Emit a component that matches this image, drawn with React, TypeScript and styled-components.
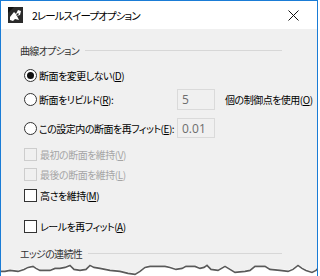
import React from "react";
import styled, { createGlobalStyle } from "styled-components";

const Global = createGlobalStyle`
  html, body { margin: 0; padding: 0; background: #ffffff; }
  body { font-family: "Noto Sans CJK JP", "Noto Sans", sans-serif; }
  u { text-decoration-thickness: 1px; text-underline-offset: 1px; }
`;

const BLUE = "#1a7cd6";

const Window = styled.div`
  position: relative;
  width: 316px;
  height: 276px;
  border: 1px solid ${BLUE};
  border-bottom: none;
  background: #f0f0f0;
  display: flex;
  flex-direction: column;
  overflow: hidden;
  font-family: "Noto Sans CJK JP", "Noto Sans", sans-serif;
  font-feature-settings: "palt";
`;

const TitleBar = styled.div`
  height: 28px;
  flex: none;
  background: #ffffff;
  display: flex;
  align-items: center;
  padding-left: 6px;
`;

const Title = styled.span`
  margin-left: 8px;
  font-size: 10.5px;
  color: #000;
  letter-spacing: -0.9px;
`;

const CloseBtn = styled.div`
  margin-left: auto;
  width: 46px;
  height: 28px;
  display: flex;
  align-items: center;
  justify-content: center;
  margin-right: 1px;
`;

const Body = styled.div`
  padding: 14px 0 0 19px;
  display: flex;
  flex-direction: column;
`;

const SectionHeader = styled.div<{ $mt?: number }>`
  height: 14px;
  margin-top: ${(p) => p.$mt ?? 0}px;
  display: flex;
  align-items: center;
  gap: 6px;
  padding-right: 35px;
  font-size: 10px;
  letter-spacing: -0.7px;
  color: #333;
`;

const Rule = styled.div`
  flex: 1;
  height: 1px;
  background: #d7d7d7;
`;

const Row = styled.div<{ $mt: number; $h: number; $disabled?: boolean }>`
  margin-top: ${(p) => p.$mt}px;
  height: ${(p) => p.$h}px;
  padding-left: 4px;
  display: flex;
  align-items: center;
  font-size: 10px;
  letter-spacing: -0.5px;
  color: ${(p) => (p.$disabled ? "#a6a6a6" : "#000")};
  white-space: nowrap;
`;

const LabelCell = styled.div`
  width: 153px;
  display: flex;
  align-items: center;
`;

const RadioCircle = styled.span<{ $checked?: boolean }>`
  width: 11px;
  height: 11px;
  border: 1px solid #333;
  border-radius: 50%;
  background: #fff;
  display: inline-flex;
  align-items: center;
  justify-content: center;
  margin-right: 2px;
  flex: none;
  &::after {
    content: "";
    width: 7px;
    height: 7px;
    border-radius: 50%;
    background: #111;
    display: ${(p) => (p.$checked ? "block" : "none")};
  }
`;

const CheckBox = styled.span<{ $disabled?: boolean }>`
  width: 11px;
  height: 11px;
  border: 1px solid ${(p) => (p.$disabled ? "#cdcdcd" : "#333")};
  background: ${(p) => (p.$disabled ? "#f0f0f0" : "#fff")};
  margin-right: 3px;
  flex: none;
`;

const NumBox = styled.div<{ $h: number }>`
  width: 32px;
  height: ${(p) => p.$h - 2}px;
  border: 1px solid #dadada;
  background: #f0f0f0;
  display: flex;
  align-items: center;
  padding-left: 4px;
  box-sizing: content-box;
  font-family: "Open Sans", "Noto Sans", sans-serif;
  font-size: 12px;
  letter-spacing: 0;
  color: #6d6d6d;
  margin-right: 10px;
`;

const Torn = styled.svg`
  position: absolute;
  left: -1px;
  bottom: 0;
  width: 320px;
  height: 20px;
`;

const pts: [number, number][] = [
  [0, 269], [5, 269], [10, 268], [18, 269], [24, 267], [28, 265], [33, 264], [36, 266],
  [40, 268], [50, 268], [55, 266], [60, 266], [65, 265], [70, 263], [74, 267], [80, 268],
  [86, 267], [90, 263], [94, 265], [100, 266], [110, 268], [120, 269], [128, 271], [135, 272],
  [140, 269], [145, 265], [150, 264], [165, 264], [170, 265], [176, 267], [182, 266], [186, 264],
  [195, 264], [200, 266], [204, 265], [207, 263], [211, 267], [218, 268], [225, 264], [230, 267],
  [235, 270], [245, 269], [250, 268], [255, 264], [265, 264], [270, 267], [280, 268], [288, 269],
  [293, 267], [298, 263], [302, 266], [306, 268], [312, 270], [316, 268], [318, 266], [320, 266],
];
const OFF = 256;
const edge = pts.map(([x, y], i) => `${i === 0 ? "M" : "L"}${x} ${y - OFF}`).join(" ");
const fill = `${edge} L320 20 L0 20 Z`;

function TornEdge() {
  return (
    <Torn viewBox="0 0 320 20">
      <defs>
        <filter id="blur" x="-5%" y="-50%" width="110%" height="200%">
          <feGaussianBlur stdDeviation="0.7" />
        </filter>
      </defs>
      <path d={fill} fill="#ffffff" />
      <path d={edge} fill="none" stroke="#5a5a5a" strokeWidth="1.6" transform="translate(0 1.4)" filter="url(#blur)" />
    </Torn>
  );
}

function AppIcon() {
  return (
    <svg width="17" height="18" viewBox="0 0 17 18">
      <path d="M1 1 H16 V17 H1 Z" fill="#2b2b2b" />
      <path d="M3 11 L7 6 L9 8 L11 4 L14 5 L13 9 L10 10 L12 14 L8 13 L6 15 L3 14 Z" fill="#ffffff" />
      <path d="M9 9 L11 7 L12 8 L10 10 Z" fill="#2b2b2b" />
      <path d="M1 1 L7 1 L1 7 Z" fill="#111" />
    </svg>
  );
}

function CloseIcon() {
  return (
    <svg width="11" height="11" viewBox="0 0 11 11">
      <path d="M0.5 0.5 L10.5 10.5 M10.5 0.5 L0.5 10.5" stroke="#111" strokeWidth="1" />
    </svg>
  );
}

export default function App() {
  return (
    <>
      <Global />
      <Window>
        <TitleBar>
          <AppIcon />
          <Title>2レールスイープオプション</Title>
          <CloseBtn>
            <CloseIcon />
          </CloseBtn>
        </TitleBar>
        <Body>
          <SectionHeader>
            <span>曲線オプション</span>
            <Rule />
          </SectionHeader>
          <Row $mt={8} $h={20}>
            <RadioCircle $checked />
            <span>断面を変更しない(<u>D</u>)</span>
          </Row>
          <Row $mt={4} $h={21}>
            <LabelCell>
              <RadioCircle />
              <span>断面をリビルド(<u>R</u>):</span>
            </LabelCell>
            <NumBox $h={21}>5</NumBox>
            <span>個の制御点を使用(<u>O</u>)</span>
          </Row>
          <Row $mt={8} $h={20}>
            <LabelCell>
              <RadioCircle />
              <span>この設定内の断面を再フィット(<u>E</u>):</span>
            </LabelCell>
            <NumBox $h={20}>0.01</NumBox>
          </Row>
          <Row $mt={8} $h={16} $disabled>
            <CheckBox $disabled />
            <span>最初の断面を維持(<u>V</u>)</span>
          </Row>
          <Row $mt={4} $h={16} $disabled>
            <CheckBox $disabled />
            <span>最後の断面を維持(<u>L</u>)</span>
          </Row>
          <Row $mt={5} $h={16}>
            <CheckBox />
            <span>高さを維持(<u>M</u>)</span>
          </Row>
          <Row $mt={15} $h={16}>
            <CheckBox />
            <span>レールを再フィット(<u>A</u>)</span>
          </Row>
          <SectionHeader $mt={12}>
            <span>エッジの連続性</span>
            <Rule />
          </SectionHeader>
        </Body>
        <TornEdge />
      </Window>
    </>
  );
}
